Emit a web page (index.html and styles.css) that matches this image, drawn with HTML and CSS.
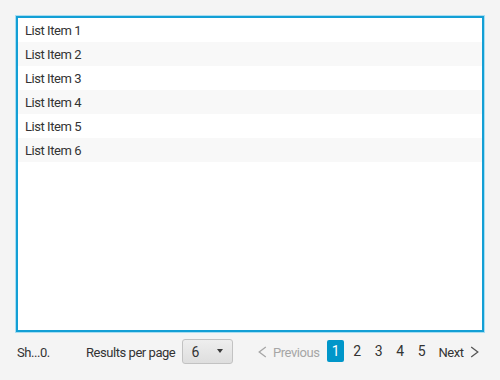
FILE: index.html
```html
<!DOCTYPE html>
<html>
<head>
<meta charset="utf-8">
<link rel="stylesheet" href="styles.css">
</head>
<body>
<div class="app">
  <div class="list">
    <div class="row">List Item 1</div>
    <div class="row odd">List Item 2</div>
    <div class="row">List Item 3</div>
    <div class="row odd">List Item 4</div>
    <div class="row">List Item 5</div>
    <div class="row odd">List Item 6</div>
  </div>
  <div class="bar">
    <span class="status">Sh...0.</span>
    <span class="rpp">Results per page</span>
    <div class="combo"><span class="val">6</span><span class="arrow"></span></div>
    <div class="pager">
      <span class="nav prev"><svg class="chev" width="9" height="12" viewBox="0 0 9 12"><polyline points="7.8,1 1.2,6 7.8,11" fill="none" stroke="currentColor" stroke-width="1.3"/></svg><span>Previous</span></span>
      <span class="page active">1</span>
      <span class="page">2</span>
      <span class="page">3</span>
      <span class="page">4</span>
      <span class="page">5</span>
      <span class="nav next"><span>Next</span><svg class="chev" width="9" height="12" viewBox="0 0 9 12"><polyline points="1.2,1 7.8,6 1.2,11" fill="none" stroke="currentColor" stroke-width="1.3"/></svg></span>
    </div>
  </div>
</div>
</body>
</html>
```
FILE: styles.css
```css
html, body { margin: 0; padding: 0; }
body {
  width: 500px; height: 380px;
  background: #f4f4f4;
  font-family: Roboto, "Liberation Sans", sans-serif;
  font-size: 13px;
  letter-spacing: -0.45px;
  color: #333;
  overflow: hidden;
}
.app { padding: 16px 16px 0 16px; }
.list {
  height: 316px;
  background: #fff;
  border: 2px solid #139fd5;
  box-shadow: 0 0 0 1px #a8ddf1;
  box-sizing: border-box;
  overflow: hidden;
}
.row {
  height: 24px;
  line-height: 24px;
  padding-left: 7px;
  padding-top: 1px;
  box-sizing: border-box;
}
.row.odd { background: #f8f8f8; }
.bar {
  display: flex;
  align-items: center;
  height: 38px;
  margin-left: -1px;
  white-space: nowrap;
}
.status { margin-left: 2px; width: 69px; flex-shrink: 0; padding-top: 2px; }
.rpp { width: 96px; flex-shrink: 0; padding-top: 2px; }
.combo {
  width: 51px; height: 25px; box-sizing: border-box;
  border: 1px solid #c2c2c2; border-radius: 3px;
  background: linear-gradient(#eeeeee, #dedede);
  display: flex; align-items: center;
  padding-left: 8.5px;
  flex-shrink: 0;
}
.val { flex: 1; font-size: 14px; padding-top: 1px; }
.arrow {
  width: 0; height: 0;
  border-left: 3.5px solid transparent; border-right: 3.5px solid transparent;
  border-top: 4px solid #3a3a3a;
  margin-right: 9px;
}
.pager { display: flex; align-items: center; margin-left: 25px; }
.nav { display: flex; align-items: center; padding-top: 2px; }
.prev { color: #a6a6a6; width: 62px; gap: 6px; margin-right: 7px; }
.prev .chev { margin-top: -1px; }
.next { margin-left: 4px; gap: 6px; }
.next .chev { margin-top: -1px; color: #555; }
.page {
  width: 17px; height: 22px; line-height: 23px; text-align: center;
  margin-right: 4.5px; font-size: 14px;
}
.page.active { background: #0096c9; color: #fff; border-radius: 2px; }
```
